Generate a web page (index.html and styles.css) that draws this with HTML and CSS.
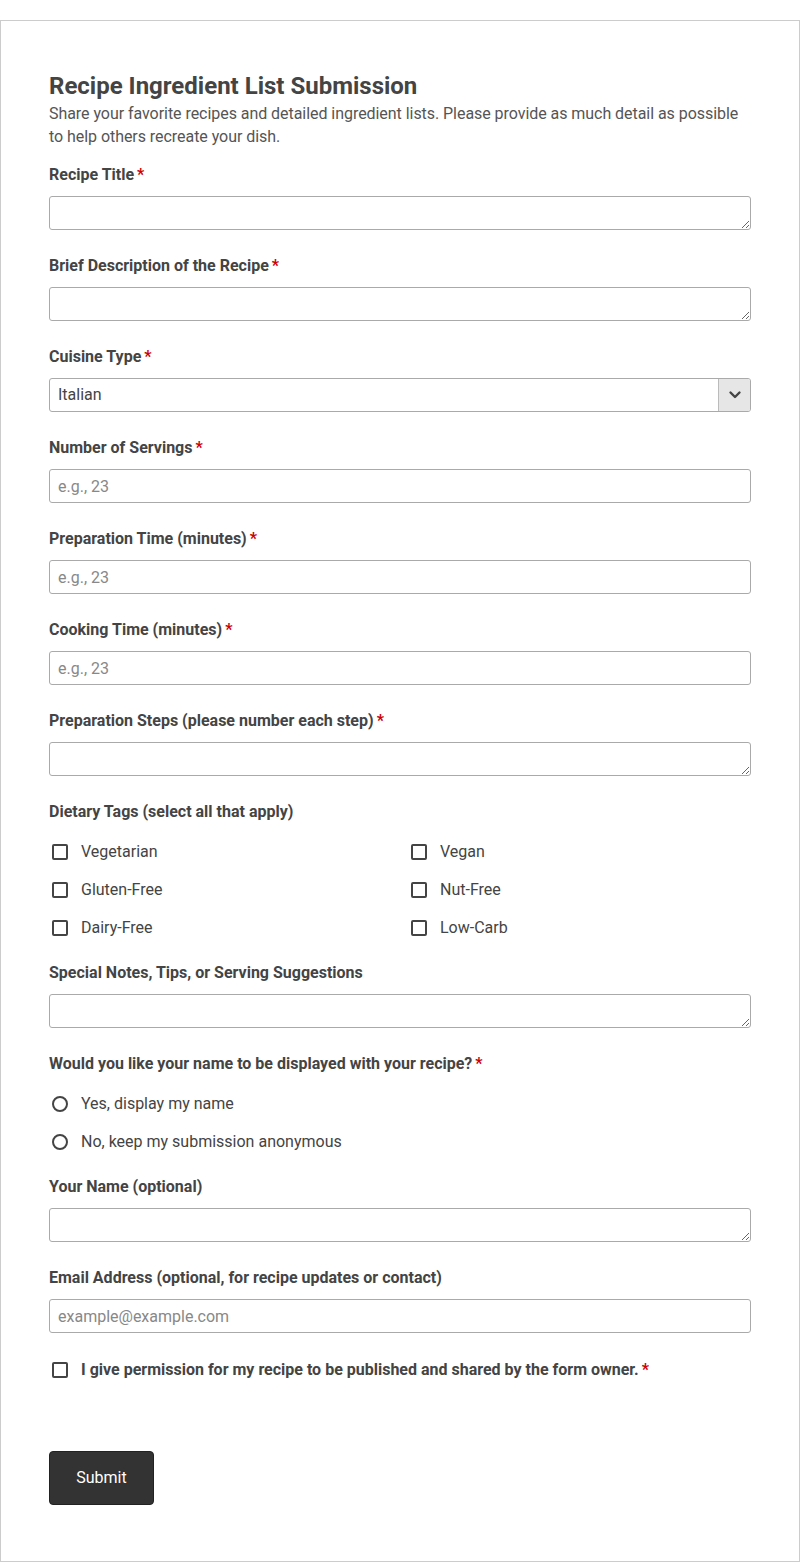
FILE: index.html
```html
<!DOCTYPE html>
<html lang="en">
<head>
    <meta charset="UTF-8">
    <meta name="viewport" content="width=device-width, initial-scale=1.0">
    <title>Recipe Ingredient List Submission</title>
    <link rel="stylesheet" href="styles.css">
</head>
<body>
    <form class="form-card" action="#" method="post">
        <div class="form-header">
            <h1 class="form-title">Recipe Ingredient List Submission</h1>
            <p class="form-desc">Share your favorite recipes and detailed ingredient lists. Please provide as much detail as possible to help others recreate your dish.</p>
        </div>

        <div class="field">
            <label class="field-label" for="title">Recipe Title<span class="req">*</span></label>
            <textarea class="text-input" id="title" rows="1"></textarea>
        </div>

        <div class="field">
            <label class="field-label" for="desc">Brief Description of the Recipe<span class="req">*</span></label>
            <textarea class="text-input" id="desc" rows="1"></textarea>
        </div>

        <div class="field">
            <label class="field-label" for="cuisine">Cuisine Type<span class="req">*</span></label>
            <div class="select-wrap">
                <select class="text-input select-input" id="cuisine">
                    <option>Italian</option>
                    <option>Mexican</option>
                    <option>Chinese</option>
                    <option>Indian</option>
                    <option>Other</option>
                </select>
                <span class="select-arrow">
                    <svg width="14" height="14" viewBox="0 0 14 14"><path d="M2.5 4.5 L7 9 L11.5 4.5" fill="none" stroke="#444" stroke-width="2.4" stroke-linecap="round" stroke-linejoin="round"/></svg>
                </span>
            </div>
        </div>

        <div class="field">
            <label class="field-label" for="servings">Number of Servings<span class="req">*</span></label>
            <input class="text-input" type="number" id="servings" placeholder="e.g., 23">
        </div>

        <div class="field">
            <label class="field-label" for="prep">Preparation Time (minutes)<span class="req">*</span></label>
            <input class="text-input" type="number" id="prep" placeholder="e.g., 23">
        </div>

        <div class="field">
            <label class="field-label" for="cook">Cooking Time (minutes)<span class="req">*</span></label>
            <input class="text-input" type="number" id="cook" placeholder="e.g., 23">
        </div>

        <div class="field">
            <label class="field-label" for="steps">Preparation Steps (please number each step)<span class="req">*</span></label>
            <textarea class="text-input" id="steps" rows="1"></textarea>
        </div>

        <div class="field">
            <span class="field-label">Dietary Tags (select all that apply)</span>
            <div class="choice-grid">
                <label class="choice"><input type="checkbox" class="box"> Vegetarian</label>
                <label class="choice"><input type="checkbox" class="box"> Vegan</label>
                <label class="choice"><input type="checkbox" class="box"> Gluten-Free</label>
                <label class="choice"><input type="checkbox" class="box"> Nut-Free</label>
                <label class="choice"><input type="checkbox" class="box"> Dairy-Free</label>
                <label class="choice"><input type="checkbox" class="box"> Low-Carb</label>
            </div>
        </div>

        <div class="field">
            <label class="field-label" for="notes">Special Notes, Tips, or Serving Suggestions</label>
            <textarea class="text-input" id="notes" rows="1"></textarea>
        </div>

        <div class="field">
            <span class="field-label">Would you like your name to be displayed with your recipe?<span class="req">*</span></span>
            <div class="choice-list">
                <label class="choice"><input type="radio" name="display" class="box round"> Yes, display my name</label>
                <label class="choice"><input type="radio" name="display" class="box round"> No, keep my submission anonymous</label>
            </div>
        </div>

        <div class="field">
            <label class="field-label" for="name">Your Name (optional)</label>
            <textarea class="text-input" id="name" rows="1"></textarea>
        </div>

        <div class="field">
            <label class="field-label" for="email">Email Address (optional, for recipe updates or contact)</label>
            <input class="text-input" type="email" id="email" placeholder="example@example.com">
        </div>

        <label class="choice consent"><input type="checkbox" class="box"> I give permission for my recipe to be published and shared by the form owner.<span class="req">*</span></label>

        <button class="submit-btn" type="submit">Submit</button>
    </form>
</body>
</html>
```

FILE: styles.css
```css
body {
    margin: 0;
    padding-top: 20px;
    font-family: Roboto, "Liberation Sans", Arial, sans-serif;
    color: #444;
    background: #fff;
}

.form-card {
    border: 1px solid #ccc;
    padding: 51px 48px 56px 48px;
}

.form-header {
    margin-bottom: 15px;
}

.form-title {
    margin: 0;
    font-size: 24px;
    line-height: 29px;
    font-weight: 700;
    color: #444;
}

.form-desc {
    margin: 1px 0 0 0;
    font-size: 16px;
    line-height: 23px;
    letter-spacing: -0.05px;
    color: #555;
}

.field {
    margin-bottom: 24px;
}

.field-label {
    display: block;
    font-size: 16px;
    line-height: 22px;
    font-weight: 700;
    padding-top: 1px;
    margin-bottom: 10px;
}

.req {
    color: #c00;
    margin-left: 3px;
}

.text-input {
    display: block;
    box-sizing: border-box;
    width: 100%;
    height: 34px;
    margin: 0;
    padding: 5px 8px;
    font-family: inherit;
    font-size: 16px;
    line-height: 22px;
    color: #444;
    background: #fff;
    border: 1px solid #aaa;
    border-radius: 3px;
    resize: vertical;
}

.text-input::placeholder {
    color: #888;
}

input[type=number]::-webkit-inner-spin-button,
input[type=number]::-webkit-outer-spin-button {
    -webkit-appearance: none;
    margin: 0;
}

.select-wrap {
    position: relative;
}

.select-input {
    appearance: none;
    -webkit-appearance: none;
    padding-right: 40px;
}

.select-arrow { /* grey box with chevron on top of the select */
    position: absolute;
    top: 1px;
    right: 1px;
    bottom: 1px;
    width: 31px;
    background: #e6e6e6;
    border-left: 1px solid #bbb;
    border-radius: 0 2px 2px 0;
    display: flex;
    align-items: center;
    justify-content: center;
    pointer-events: none;
}

.choice-grid {
    display: grid;
    grid-template-columns: 1fr 1fr;
    column-gap: 16px;
    row-gap: 16px;
    padding-top: 8px;
    margin-bottom: -2px;
}

.choice-list {
    display: flex;
    flex-direction: column;
    gap: 16px;
    padding-top: 8px;
    margin-bottom: -2px;
}

.choice {
    display: flex;
    align-items: center;
    font-size: 16px;
    line-height: 22px;
    color: #444;
}

.box {
    appearance: none;
    -webkit-appearance: none;
    box-sizing: border-box;
    width: 16px;
    height: 16px;
    margin: 0 13px 0 3px;
    border: 2px solid #444;
    border-radius: 2px;
    background: #fff;
    flex: 0 0 auto;
}

.box.round {
    border-radius: 50%;
}

.consent {
    font-weight: 700;
    margin-top: 26px;
}

.submit-btn {
    display: block;
    margin-top: 70px;
    width: 105px;
    height: 54px;
    padding: 0 0 1px 0;
    font-family: inherit;
    font-size: 16px;
    color: #fff;
    background: #333;
    border: 1px solid #222;
    border-radius: 4px;
    cursor: pointer;
}

.submit-btn:hover {
    background: #222;
}
```
